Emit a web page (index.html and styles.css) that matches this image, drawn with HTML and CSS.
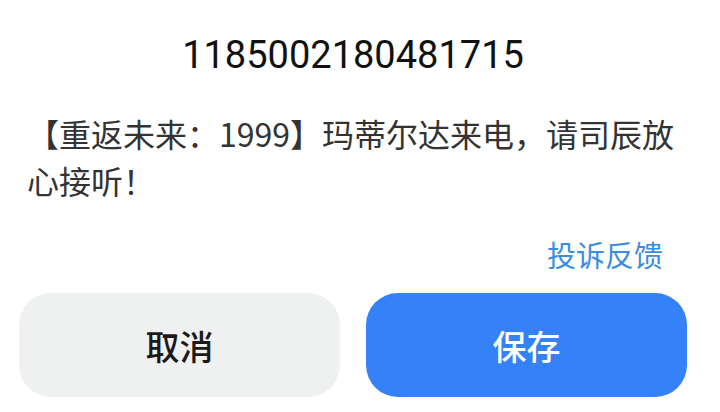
FILE: index.html
```html
<!DOCTYPE html>
<html lang="zh-CN">
<head>
<meta charset="utf-8">
<title>来电提示</title>
<link rel="stylesheet" href="styles.css">
</head>
<body>
<div class="dialog">
  <h1 class="title">1185002180481715</h1>
  <p class="message">【重返未来：1999】玛蒂尔达来电，请司辰放心接听！</p>
  <div class="feedback-row"><a class="feedback" href="#">投诉反馈</a></div>
  <div class="actions">
    <button class="btn btn-cancel" type="button">取消</button>
    <button class="btn btn-save" type="button">保存</button>
  </div>
</div>
</body>
</html>
```
FILE: styles.css
```css
html, body {
  margin: 0;
  padding: 0;
  background: #ffffff;
}

.dialog {
  padding: 33px 33px 0 19px;
  font-family: "Noto Sans CJK SC", "Noto Sans", sans-serif;
}

.title {
  margin: 0;
  text-align: center;
  font-family: Roboto, "Noto Sans CJK SC", sans-serif;
  font-weight: 400;
  font-size: 38px;
  line-height: 44px;
  color: #111111;
}

.message {
  margin: 33px 0 0;
  padding-left: 8px;
  font-size: 32px;
  line-height: 47px;
  color: #333333;
  text-spacing-trim: space-all;
}

.feedback-row {
  display: flex;
  justify-content: flex-end;
  margin-top: 30px;
  padding-right: 24px;
}

.feedback {
  font-size: 29px;
  line-height: 40px;
  color: #3a8de2;
  text-decoration: none;
}

.actions {
  display: grid;
  grid-template-columns: 1fr 1fr;
  gap: 26px;
  margin-top: 19px;
}

.btn {
  height: 104px;
  border: none;
  border-radius: 32px;
  font-family: "Noto Sans CJK SC", sans-serif;
  font-size: 34px;
  font-weight: 500;
  padding: 0;
}

.btn-cancel {
  background: #eff0f0;
  color: #1a1a1a;
}

.btn-save {
  background: #3581f8;
  color: #ffffff;
}
```
